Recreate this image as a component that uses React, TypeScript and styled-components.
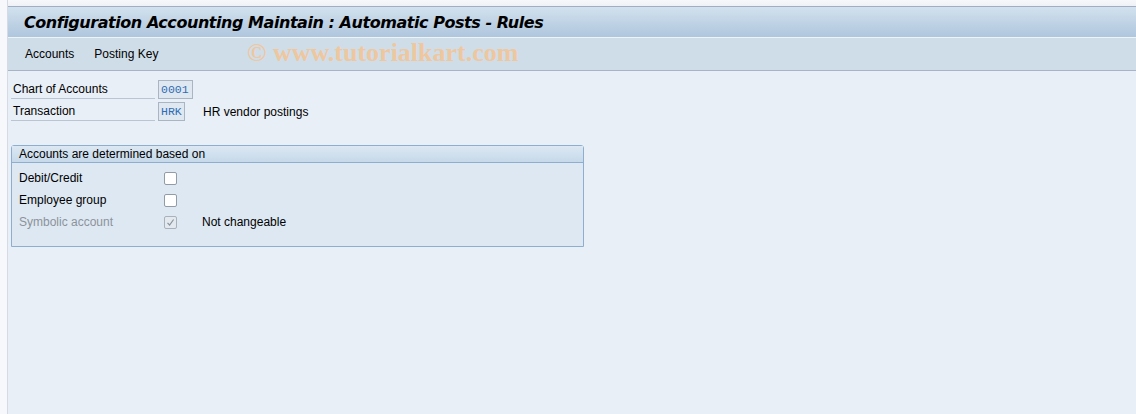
import React from "react";
import styled, { createGlobalStyle } from "styled-components";

const Global = createGlobalStyle`
  html, body { margin: 0; padding: 0; }
  body {
    width: 1136px;
    height: 414px;
    overflow: hidden;
    background: #f6f8fb;
    font-family: "Liberation Sans", Arial, sans-serif;
  }
  #root { height: 100%; }
`;

const Frame = styled.div`
  display: flex;
  height: 414px;
`;

const Gutter = styled.div`
  width: 7px;
  background: #f7f8fb;
`;

const Main = styled.div`
  flex: 1;
  display: flex;
  flex-direction: column;
  border-left: 1px solid #d5dbe5;
`;

const TopStrip = styled.div`
  height: 6px;
  background: linear-gradient(#f6f7fa, #eef1f6);
  border-bottom: 1px solid #a2adc2;
`;

const TitleBar = styled.div`
  height: 30px;
  display: flex;
  align-items: center;
  padding-left: 16px;
  background: linear-gradient(#d2e1ee, #afc6dd);
  border-bottom: 1px solid #eef3f8;
`;

const Title = styled.h1`
  margin: 0;
  font-family: "DejaVu Sans", Tahoma, sans-serif;
  font-size: 16px;
  font-weight: bold;
  font-style: italic;
  color: #000;
  letter-spacing: -0.45px;
`;

const Toolbar = styled.div`
  height: 32px;
  display: flex;
  align-items: center;
  padding-left: 17px;
  gap: 20px;
  background: #cfdde8;
  border-bottom: 1px solid #a6b4c7;
  position: relative;
`;

const MenuItem = styled.span`
  font-size: 12px;
  color: #000;
`;

const Watermark = styled.span`
  position: absolute;
  left: 239px;
  top: 0px;
  font-family: "Liberation Serif", "Times New Roman", serif;
  font-weight: bold;
  font-size: 26px;
  color: #efc79f;
`;

const Body = styled.div`
  flex: 1;
  background: #e8eff7;
  padding: 9px 0 0 3px;
  display: flex;
  flex-direction: column;
`;

const FieldRow = styled.div`
  display: flex;
  align-items: center;
  height: 19px;
  margin-bottom: 3px;
`;

const FieldLabel = styled.div`
  width: 142px;
  height: 18px;
  padding-left: 2px;
  line-height: 19px;
  font-size: 12px;
  color: #000;
  border-bottom: 1px solid #b9c5d3;
`;

const Input = styled.div<{ $w: number }>`
  margin-left: 3px;
  width: ${(p) => p.$w}px;
  height: 17px;
  box-sizing: content-box;
  border: 1px solid #aab5c3;
  background: #dfe8f1;
  font-family: "Liberation Mono", "Courier New", monospace;
  font-size: 11.5px;
  line-height: 18px;
  padding-left: 2px;
  color: #2f6cb1;
`;

const Desc = styled.span`
  margin-left: 18px;
  font-size: 12px;
  color: #000;
`;

const Group = styled.div`
  margin-top: 21px;
  width: 571px;
  height: 100px;
  border: 1px solid #8eaed0;
  border-radius: 3px 3px 0 0;
  background: #dde8f3;
  display: flex;
  flex-direction: column;
`;

const GroupHeader = styled.div`
  height: 16px;
  line-height: 16px;
  padding-left: 7px;
  font-size: 12px;
  color: #000;
  background: linear-gradient(#dce8f3, #c6d9ea);
  border-bottom: 1px solid #8eaed0;
`;

const GroupBody = styled.div`
  padding: 4px 0 0 7px;
  display: flex;
  flex-direction: column;
`;

const CheckRow = styled.div`
  display: flex;
  align-items: center;
  height: 22px;
`;

const CheckLabel = styled.span<{ $disabled?: boolean }>`
  width: 145px;
  font-size: 12px;
  color: ${(p) => (p.$disabled ? "#8c9399" : "#000")};
`;

const Box = styled.span<{ $disabled?: boolean }>`
  width: 11px;
  height: 11px;
  border: 1px solid ${(p) => (p.$disabled ? "#a9b1ba" : "#929ba6")};
  border-radius: 2px;
  background: ${(p) => (p.$disabled ? "#e4e9ef" : "#ffffff")};
  display: inline-flex;
  align-items: center;
  justify-content: center;
`;

const CheckNote = styled.span`
  margin-left: 25px;
  font-size: 12px;
  color: #000;
`;

export default function App() {
  return (
    <>
      <Global />
      <Frame>
        <Gutter />
        <Main>
          <TopStrip />
          <TitleBar>
            <Title>Configuration Accounting Maintain : Automatic Posts - Rules</Title>
          </TitleBar>
          <Toolbar>
            <MenuItem>Accounts</MenuItem>
            <MenuItem>Posting Key</MenuItem>
            <Watermark>© www.tutorialkart.com</Watermark>
          </Toolbar>
          <Body>
            <FieldRow>
              <FieldLabel>Chart of Accounts</FieldLabel>
              <Input $w={31}>0001</Input>
            </FieldRow>
            <FieldRow>
              <FieldLabel>Transaction</FieldLabel>
              <Input $w={23}>HRK</Input>
              <Desc>HR vendor postings</Desc>
            </FieldRow>
            <Group>
              <GroupHeader>Accounts are determined based on</GroupHeader>
              <GroupBody>
                <CheckRow>
                  <CheckLabel>Debit/Credit</CheckLabel>
                  <Box />
                </CheckRow>
                <CheckRow>
                  <CheckLabel>Employee group</CheckLabel>
                  <Box />
                </CheckRow>
                <CheckRow>
                  <CheckLabel $disabled>Symbolic account</CheckLabel>
                  <Box $disabled>
                    <svg width="9" height="9" viewBox="0 0 9 9">
                      <path d="M1.5 4.8 L3.6 7 L7.6 1.5" fill="none" stroke="#8a949e" strokeWidth="1.2" />
                    </svg>
                  </Box>
                  <CheckNote>Not changeable</CheckNote>
                </CheckRow>
              </GroupBody>
            </Group>
          </Body>
        </Main>
      </Frame>
    </>
  );
}
